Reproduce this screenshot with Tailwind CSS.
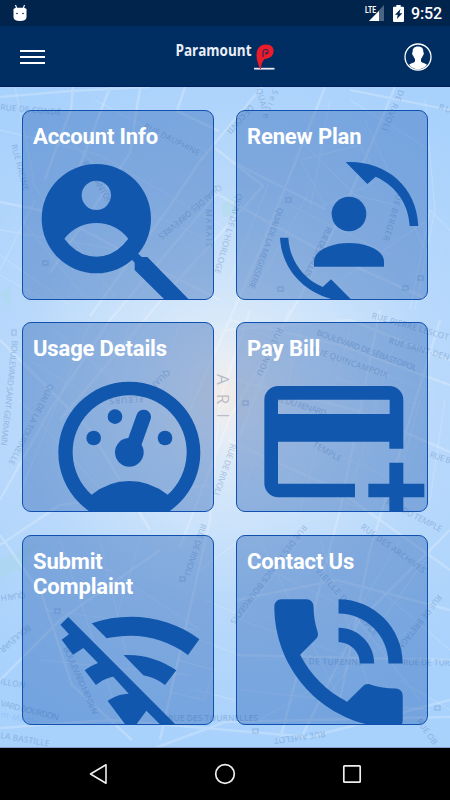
<!DOCTYPE html>
<html lang="en">
<head>
  <meta charset="UTF-8">
  <meta name="viewport" content="width=device-width, initial-scale=1">
  <title>Paramount</title>
  <script src="https://cdn.jsdelivr.net/npm/@tailwindcss/browser@4"></script>
</head>
<body class="w-[450px] h-[800px] flex flex-col overflow-hidden bg-black font-['Roboto',sans-serif]">
  <!-- status bar -->
  <div class="h-[26px] shrink-0 bg-[#00244c] flex items-center justify-between pl-[13px] pr-[8px]">
    <svg class="w-[14px] h-[18px]" viewBox="0 0 14 18">
      <path d="M2.500 1l1.500 4M11.500 1L10 5" stroke="#fff" stroke-width="1.100"/>
      <path d="M.5 5l2-1.200h9l2 1.200V13q0 4-6.500 4T.5 13z" fill="#fff"/>
      <circle cx="4" cy="9.500" r=".8" fill="#00244c"/>
      <circle cx="10" cy="9.500" r=".8" fill="#00244c"/>
    </svg>
    <div class="flex items-center">
      <svg class="w-[20px] h-[18px] mr-[8px]" viewBox="0 0 20 18">
        <path d="M19 1v16H4z" fill="#4b6685"/>
        <path d="M14 7v10H4z" fill="#fff"/>
        <text x="0" y="8.500" font-size="9" font-weight="700" textLength="11" lengthAdjust="spacingAndGlyphs" fill="#fff">LTE</text>
      </svg>
      <svg class="w-[11px] h-[17px] mr-[7px]" viewBox="0 0 11 17">
        <path d="M3.300 0h4.400v1.700H10q1 0 1 1V16q0 1-1 1H1q-1 0-1-1V2.700q0-1 1-1h2.300z" fill="#fff"/>
        <path d="M7.500 4L2 9.800h2.700L4 14l5.300-5.700H6.500z" fill="#00244c"/>
      </svg>
      <span class="text-white text-[16px] leading-[26px] pt-px w-[31px] font-medium tracking-[-0.1px] whitespace-nowrap">9:52</span>
    </div>
  </div>

  <!-- header -->
  <header class="h-[61px] shrink-0 bg-[#002d62] border-b border-[#001e5c] flex items-center justify-between pt-[2px] pl-[20px] pr-[18px]">
    <div class="w-[25px] flex flex-col gap-[4px]">
      <span class="h-[2px] bg-white"></span>
      <span class="h-[2px] bg-white"></span>
      <span class="h-[2px] bg-white"></span>
    </div>
    <svg class="w-[102px] h-[34px] ml-[2px] overflow-visible" viewBox="174.500 40.500 102 34">
      <text x="175" y="56.500" font-family="Open Sans" font-size="16.500" font-weight="700" textLength="76" lengthAdjust="spacingAndGlyphs" fill="#e9eef7">Paramount</text>
      <path d="M253.500 68.300h20.500v1.800h-20.500z" fill="#e8eaf2"/>
      <path d="M259.500 69.500c-1.500-4-3.500-9-3.500-13.500 0-7 3.500-10.700 9-10.900 6-.1 8.800 3.300 8 7.700-.7 4.200-4.200 6.400-8.800 6.700-2.400 2-3.500 5-3.700 10z" fill="#ec1c2b"/>
      <path d="M262.500 57.500v-5c.3-2 1.700-2.800 3.400-2.500 2.600.6 2.300 4.300-.4 4.400v-1.900" fill="none" stroke="#1b2a5c" stroke-width="1.100"/>
    </svg>
    <svg class="w-[28px] h-[28px]" viewBox="0 0 28 28">
      <circle cx="14" cy="14" r="13" fill="none" stroke="#fff" stroke-width="1.300"/>
      <path d="M14 3.500c3.800 0 5.600 2.200 5.300 5.500.9.200.5 3.300-.6 3.700-.4 1.500-1 2.400-1.700 3.200v2.600c1.200 1.500 4 1.700 6 3.300A12.300 12.300 0 0 1 14 26.300 12.300 12.300 0 0 1 5 21.800c2-1.600 4.800-1.800 6-3.300v-2.600c-.7-.8-1.300-1.700-1.700-3.200-1.100-.4-1.500-3.500-.6-3.700C8.400 5.700 10.200 3.500 14 3.500z" fill="#fff"/>
    </svg>
  </header>

  <main class="relative h-[661px] shrink-0 overflow-hidden border-b border-[#7f9fc9]">
    <!-- map backdrop -->
    <svg class="absolute inset-0 w-[450px] h-[661px]" viewBox="0 87 450 661">
      <defs>
        <radialGradient id="glow" gradientUnits="userSpaceOnUse" cx="225" cy="395" r="350">
          <stop offset="0" stop-color="#f2ece8"/>
          <stop offset=".1" stop-color="#e8edf4"/>
          <stop offset=".24" stop-color="#d6e8fa"/>
          <stop offset=".6" stop-color="#b9d9fb"/>
          <stop offset="1" stop-color="#a8d1fc"/>
        </radialGradient>
      </defs>
      <rect y="87" width="450" height="661" fill="url(#glow)"/>
      <path d="M222 205l11-8 4 18-14 2zM0 295l10-10v25zM0 560l40-20-20 30-20 8z" fill="#a5dcd8" opacity=".25"/>
      <g fill="none" stroke="#fff" stroke-linejoin="round">
        <path stroke-opacity=".22" stroke-width="2.500" d="M0 97L70 91 150 87M73 87l-2 22-26 70M110 87L82 160 50 240M140 88l-10 65-80 120M185 87l-8 24 42 20M0 202l50 10 90 48 80 40M215 148l48 38-90 100L60 420M215 193l110 60 100 45M262 87l-62 74-30 45-80 110M235 163l90 46M325 87L300 150l-40 100-70 160M395 87l-50 120-45 90-70 120-50 130M450 110l-100-20M0 340l90 90 60 100M0 500l50-90 60-90 110-130M0 545l60-40 150-20M0 535l42 60 30 90 60 55M0 680l60-60 100-70M230 320l110 25 110 40M235 380l120 30 95 42M228 440l110 50 112 80M250 310l-30 90-10 120-50 220M290 310l-60 150M380 310l-40 200-60 230M440 320l-70 230-30 150M450 530l-90 90-60 120M237 600l100-20 113 30M237 655l213 5M0 728l110-8 200 17 140-37M155 748l70-26 225-5M450 360l-100-40-125 10"/>
        <path stroke-opacity=".16" stroke-width="1.300" d="M0 130l100 25 120 70M15 87l20 100 80 110M0 230l120 20M0 255l70 50M0 275l45 25M22 220l65 80M35 200l-35 70M95 100l110 60M60 130l80 80 70 30M305 145l50 50 40 10M300 160l60-15 20 35-55 25zM330 100l-20 110M350 100l80 50M365 120l60 130M270 180l-40 100M290 205l100 50M310 190l-60 110M340 280l88-60M425 100l10 110-20 100M450 230l-20-20-20 100M30 360l80 50M20 400l90 100M55 330l140 120M90 323l-70 170M130 323l-20 60 110 60M180 323l-30 100M250 330l180 60M250 350l170 55M255 420l140 60M245 460l120 50M240 500l60-170M300 330l-35 160M350 330l-50 180M395 340l-50 170M420 400l-30 110M445 400l-15 100M30 560l80 10 90 60M45 610l150 20M40 660l150 15M60 540l60 180M100 540l30 130M140 540l-30 100M178 660l36 10-10 30-34-8zM205 600l35 15M200 640l40 15M200 570l40-30M195 690l40 10M250 560l100 50 70 90M260 540l90 180M300 540l-60 80M320 540l60 180M400 540l-60 100M425 560l-100 140M240 620l120 40M240 690l190 20M260 720l150-90M380 590l70 60M400 680l50 30"/>
      </g>
      <!-- metro stops -->
      <g fill="none" stroke="#5f87bd" stroke-opacity=".28" stroke-width="1.500">
        <path d="M286 198h5v4h-5zM278 287h5v4h-5zM403 286h5v4h-5zM418 276h5v4h-5zM43 261h5v4h-5zM12 330h4v5h-4zM243 401h5v4h-5zM180 577h5v4h-5zM55 609h5v4h-5zM253 729h5v4h-5zM435 706h5v4h-5z"/>
      </g>
      <!-- street names -->
      <g font-family="Open Sans" font-size="8.500" font-weight="600" fill="#446ea9" fill-opacity=".28">
        <text transform="translate(0 110) rotate(5)" textLength="61">RUE DE CONDÉ</text>
        <text transform="translate(11 145) rotate(75)" textLength="48">RUE RACINE</text>
        <text transform="translate(143 128) rotate(27)" textLength="62">RUE DAUPHINE</text>
        <text transform="translate(82 163) rotate(58)" textLength="50">RUE DANTON</text>
        <text transform="translate(219 184) rotate(140)" textLength="80">QUAI DES ORFÈVRES</text>
        <text transform="translate(206 209) rotate(90)" textLength="38">MARAIS</text>
        <text transform="translate(256 89) rotate(75)">QUAI</text>
        <text transform="translate(250 104) rotate(132)" textLength="36">DE CONTI</text>
        <text transform="translate(273 89) rotate(110)" letter-spacing="2">Seine</text>
        <text transform="translate(399 89) rotate(113)" textLength="44">DE RIVOLI</text>
        <text transform="translate(438 109) rotate(20)" textLength="13">RU</text>
        <text transform="translate(237 193) rotate(106)" textLength="83">QUAI DE L'HORLOGE</text>
        <text transform="translate(278 207) rotate(110)" textLength="86">QUAI DE LA MEGISSERIE</text>
        <text transform="translate(327 226) rotate(115)" textLength="55">RUE DES HALLES</text>
        <text transform="translate(398 188) rotate(106)" textLength="54">RUE BERGER</text>
        <text transform="translate(12 340) rotate(96)" textLength="106">BOULEVARD SAINT-GERMAIN</text>
        <text transform="translate(49 383) rotate(117)" textLength="90">QUAI DE LA TOURNELLE</text>
        <text transform="translate(167 369) rotate(138)">QUAI</text>
        <text transform="translate(143 396) rotate(176)" textLength="34">FLEURS</text>
        <text transform="translate(371 318) rotate(16)" textLength="80">RUE PIERRE LESCOT</text>
        <text transform="translate(316 335) rotate(20)" textLength="106">BOULEVARD DE SÉBASTOPOL</text>
        <text transform="translate(388 343) rotate(16)" textLength="63">RUE SAINT-DEN</text>
        <text transform="translate(311 352) rotate(19)" textLength="80">RUE QUINCAMPOIX</text>
        <text transform="translate(270 399) rotate(17)" textLength="58">RUE DU RENARD</text>
        <text transform="translate(312 446) rotate(30)">TEMPLE</text>
        <text transform="translate(278 327) rotate(115)" textLength="52">RUE RENOU</text>
        <text transform="translate(385 504) rotate(27)" textLength="62">RUE DU TEMPLE</text>
        <text transform="translate(429 457) rotate(18)" textLength="22">RUE B</text>
        <text transform="translate(231 443) rotate(109)" textLength="54">RUE DE RIVOLI</text>
        <text transform="translate(201 523) rotate(108)" textLength="54">RUE DE RIVOLI</text>
        <text transform="translate(303 524) rotate(127)" textLength="122">RUE DES FRANCS BOURGEOIS</text>
        <text transform="translate(315 571) rotate(48)" textLength="88">VIEILLE DU TEMPLE</text>
        <text transform="translate(360 528) rotate(36)" textLength="78">RUE DES ARCHIVES</text>
        <text transform="translate(438 594) rotate(128)" textLength="72">RUE DE BRETAGNE</text>
        <text transform="translate(289 664) rotate(1)" textLength="74">RUE DE TURENNE</text>
        <text transform="translate(403 665) rotate(1)" textLength="47">RUE DE TUR</text>
        <text transform="translate(168 721)" textLength="90">RUE DES TOURNELLES</text>
        <text transform="translate(325 731) rotate(172)" textLength="52">RUE AMELOT</text>
        <text transform="translate(416 721) rotate(55)" textLength="30">RUE OB</text>
        <text transform="translate(0 738) rotate(10)">LA BASTILLE</text>
        <text transform="translate(0 706) rotate(14)" textLength="60">VARD BOURDON</text>
        <text transform="translate(0 717) rotate(12)" fill="#5fb0f5">nt-Martin</text>
        <text transform="translate(63 648) rotate(66)" textLength="74">BOULEVARD HENRI IV</text>
        <text transform="translate(28 624) rotate(140)" textLength="38">BOULEVAR</text>
        <text transform="translate(25 592) rotate(172)" textLength="25">QUAI H</text>
        <text transform="translate(0 684) rotate(10)">ILLON</text>
        <text transform="translate(217 374) rotate(90)" font-size="17" font-weight="400" fill="#5c6f8c" fill-opacity=".4" letter-spacing="9">ARI</text>
      </g>
    </svg>

    <!-- menu tiles -->
    <div class="relative grid grid-cols-[192px_192px] grid-rows-[190px_190px_190px] gap-x-[22px] gap-y-[22.4px] pt-[23px] pl-[22px]">
      <a href="#" class="relative overflow-hidden rounded-[9px] border border-[#1050ae] bg-[#1450a8]/35 pt-[12.5px] px-[10px]">
        <svg class="absolute -inset-px w-[192px] h-[190px]" viewBox="66 30 576 570" fill="#1257ae">
          <path fill-rule="evenodd" d="M125 356a164 164 0 1 0 328 0a164 164 0 1 0-328 0zM245 286a44 44 0 1 0 88 0a44 44 0 1 0-88 0zM193 416Q231 369 289 369T385 416Q345 470 289 470T193 416z"/>
          <path d="M390 445L418 464l7 7h17l126 129h-73l-91-90v-22l-7-7z"/>
        </svg>
        <h2 class="relative text-white text-[22px] leading-[25px] font-bold tracking-[-0.15px]">Account Info</h2>
      </a>
      <a href="#" class="relative overflow-hidden rounded-[9px] border border-[#1050ae] bg-[#1450a8]/35 pt-[12.5px] px-[10px]">
        <svg class="absolute -inset-px w-[192px] h-[190px]" viewBox="33 30 576 570" fill="#1257ae">
          <circle cx="372" cy="342" r="52"/>
          <path d="M267 500V485C267 450 320 429 372 429S477 450 477 485V500z"/>
          <path d="M362 186C478 180 575 255 580 378H554C551 315 515 258 452 230L427 252z"/>
          <path d="M165 413H190C193 475 230 535 293 561L318 538L382 602H340C235 582 170 505 165 413z"/>
        </svg>
        <h2 class="relative text-white text-[22px] leading-[25px] font-bold tracking-[-0.15px]">Renew Plan</h2>
      </a>
      <a href="#" class="relative overflow-hidden rounded-[9px] border border-[#1050ae] bg-[#1450a8]/35 pt-[13px] px-[10px]">
        <svg class="absolute -inset-px w-[192px] h-[190px]" viewBox="66 37 576 570" fill="#1257ae">
          <path fill-rule="evenodd" d="M175 429a213 213 0 1 0 426 0a213 213 0 1 0-426 0zM275 555A171 171 0 1 1 503 555Q450 514 388 514T275 555z"/>
          <circle cx="281" cy="385" r="22"/>
          <circle cx="345" cy="321" r="22"/>
          <circle cx="495" cy="385" r="22"/>
          <circle cx="388" cy="428" r="43"/>
          <path d="M403 400L431 322" stroke="#1257ae" stroke-width="44" stroke-linecap="round"/>
        </svg>
        <h2 class="relative text-white text-[22px] leading-[25px] font-bold tracking-[-0.15px]">Usage Details</h2>
      </a>
      <a href="#" class="relative overflow-hidden rounded-[9px] border border-[#1050ae] bg-[#1450a8]/35 pt-[13px] px-[10px]">
        <svg class="absolute -inset-px w-[192px] h-[190px]" viewBox="33 37 576 570" fill="#1257ae">
          <path fill-rule="evenodd" d="M160 229H493a42 42 0 0 1 42 42V417H493V396H159V522H390V563H160a42 42 0 0 1-42-42V271a42 42 0 0 1 42-42zM159 270V313H494V270z"/>
          <path d="M493 459h42v63h63v41h-63v44h-42v-44h-63v-41h63z"/>
        </svg>
        <h2 class="relative text-white text-[22px] leading-[25px] font-bold tracking-[-0.05px]">Pay Bill</h2>
      </a>
      <a href="#" class="relative overflow-hidden rounded-[9px] border border-[#1050ae] bg-[#1450a8]/35 pt-[13px] px-[10px]">
        <svg class="absolute -inset-px w-[192px] h-[190px]" viewBox="66 45 576 570" fill="#1257ae">
          <path d="M275 310C385 272 510 290 598 358L564 405C495 353 410 335 320 355z"/>
          <path d="M371 405C430 402 485 420 529 451L495 495C475 480 455 471 430 466z"/>
          <path d="M205 291L528 615H482L439 572L408 615H377L323 543C340 530 360 522 386 521L340 470C325 472 304 481 288 495L254 451C268 441 280 434 294 429L250 384L219 404L185 359L207 343L181 314z"/>
        </svg>
        <h2 class="relative text-white text-[22px] leading-[25px] font-bold tracking-[-0.15px]">Submit<br>Complaint</h2>
      </a>
      <a href="#" class="relative overflow-hidden rounded-[9px] border border-[#1050ae] bg-[#1450a8]/35 pt-[13px] px-[10px]">
        <svg class="absolute -inset-px w-[192px] h-[190px]" viewBox="33 45 576 570" fill="#1257ae">
          <path transform="translate(83.800 173.800) scale(21.400)" d="M20 15.500c-1.250 0-2.450-.2-3.570-.57-.35-.11-.74-.03-1.020.24l-2.200 2.200c-2.830-1.440-5.150-3.750-6.590-6.590l2.200-2.210c.28-.26.36-.65.25-1C8.700 6.450 8.500 5.250 8.500 4c0-.55-.45-1-1-1H4c-.55 0-1 .45-1 1 0 9.390 7.610 17 17 17 .55 0 1-.45 1-1v-3.500c0-.55-.45-1-1-1zM19 12h2c0-4.970-4.030-9-9-9v2c3.870 0 7 3.130 7 7zm-4 0h2c0-2.760-2.240-5-5-5v2c1.660 0 3 1.340 3 3z"/>
        </svg>
        <h2 class="relative text-white text-[22px] leading-[25px] font-bold tracking-[-0.15px]">Contact Us</h2>
      </a>
    </div>
  </main>

  <!-- system navigation -->
  <nav class="h-[52px] shrink-0 bg-black flex items-center justify-between pl-[88px] pr-[88px]">
    <svg class="w-[20px] h-[22px]" viewBox="0 0 20 22"><path d="M18 1.800v18.400L2.500 11z" fill="none" stroke="#eee" stroke-width="1.600" stroke-linejoin="round"/></svg>
    <svg class="w-[22px] h-[22px]" viewBox="0 0 22 22"><circle cx="11" cy="11" r="9.300" fill="none" stroke="#eee" stroke-width="1.700"/></svg>
    <svg class="w-[20px] h-[20px]" viewBox="0 0 20 20"><rect x="1.800" y="1.800" width="16.400" height="16.400" rx=".8" fill="none" stroke="#eee" stroke-width="1.700"/></svg>
  </nav>
</body>
</html>
